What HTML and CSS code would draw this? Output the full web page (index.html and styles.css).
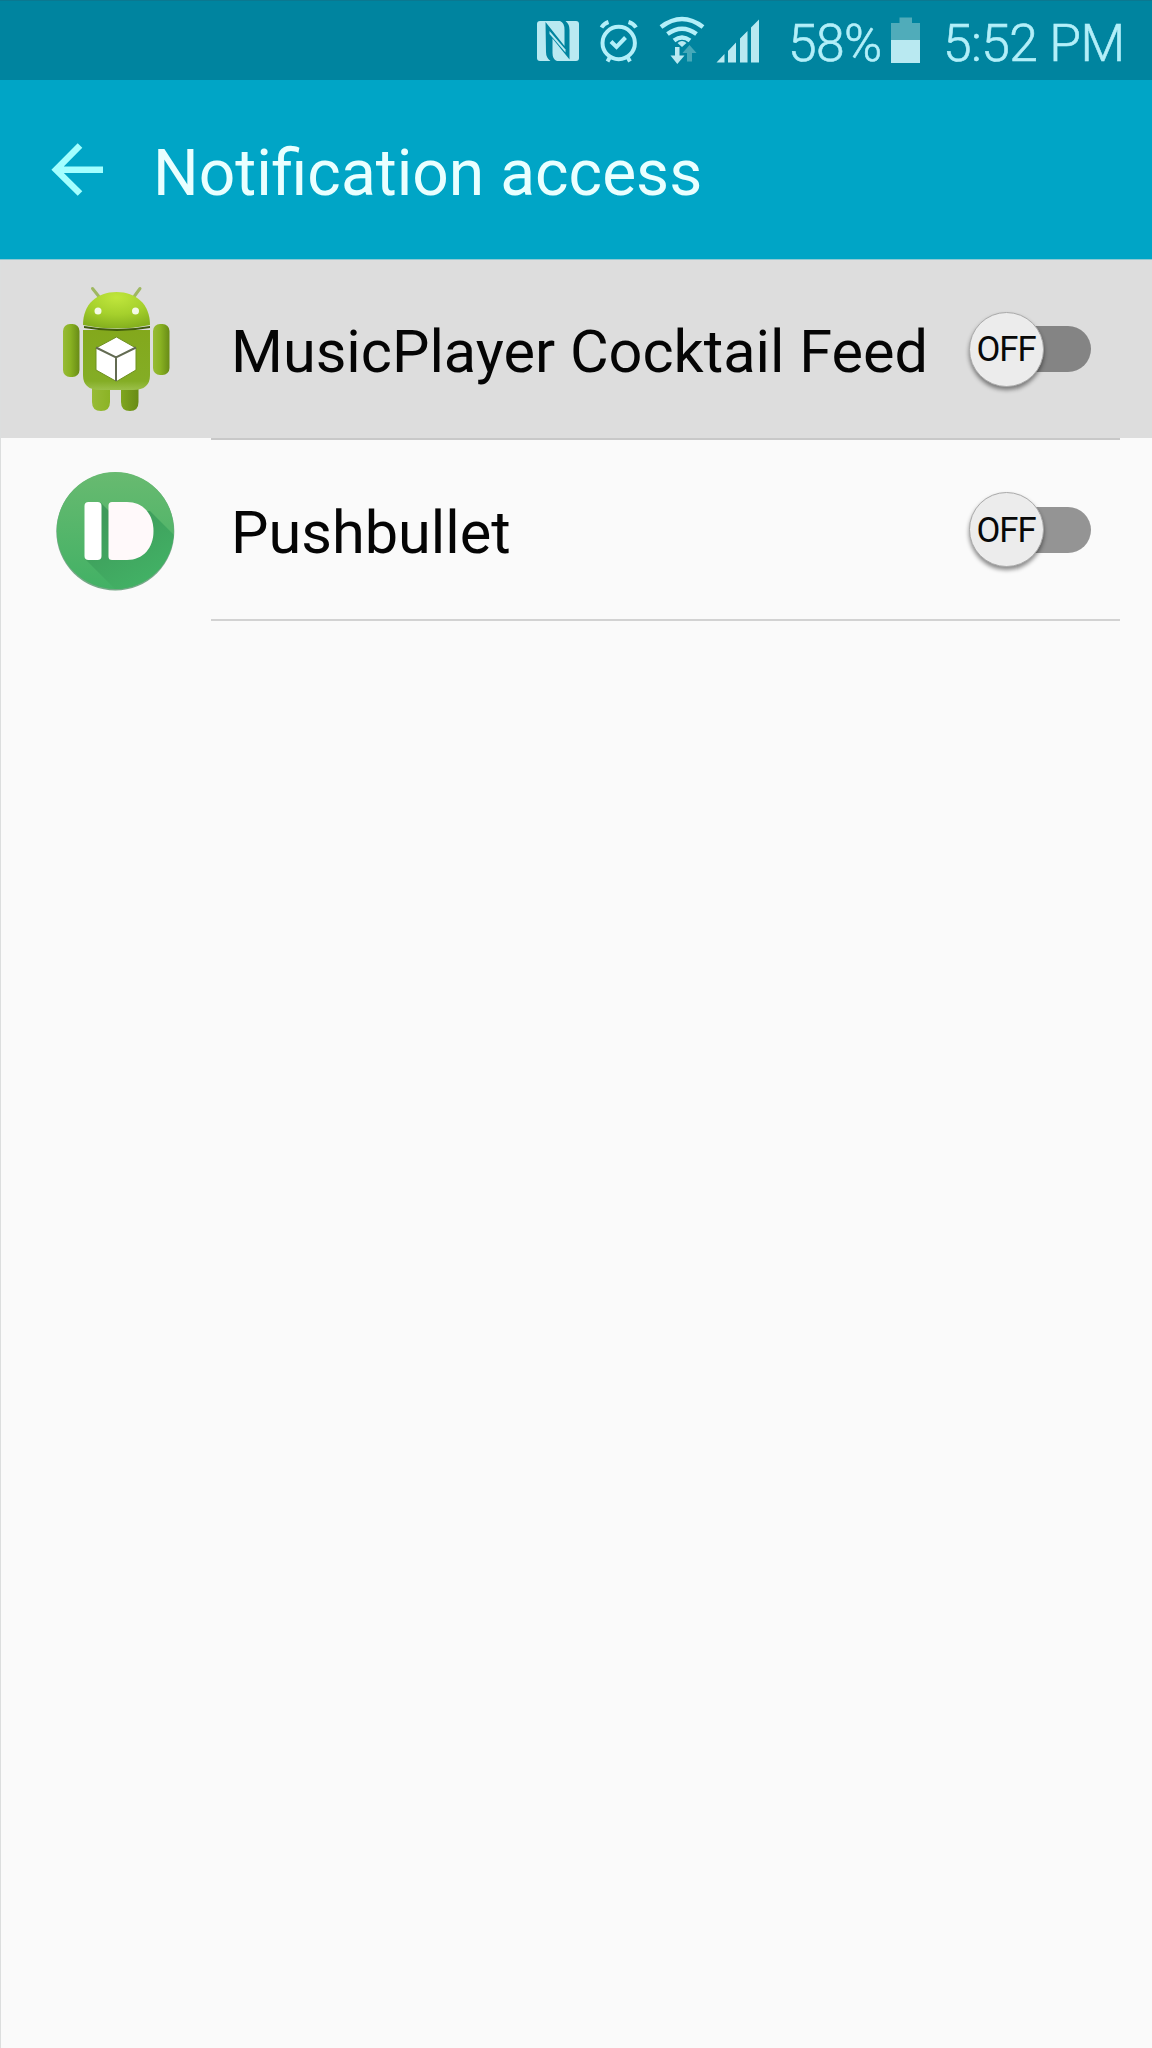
FILE: index.html
```html
<!DOCTYPE html>
<html lang="en">
<head>
<meta charset="utf-8">
<title>Notification access</title>
<link rel="stylesheet" href="styles.css">
</head>
<body>
<div class="screen">
  <div class="status-bar">
    <svg class="status-icon" viewBox="530 0 60 80" aria-label="NFC">
      <rect x="537" y="21" width="42" height="40" rx="3"/>
      <path class="slit" d="M545.500 22L564.500 46V30Q564.500 22.500 560 21H565.500Q569.500 24 569.500 30V59.500L552.500 38.500V53Q552.500 59.500 557 61H550.500Q546 58 546 52Z"/>
      <path d="M549.500 31L565.500 49.500V52.500L549.500 34Z"/>
    </svg>
    <svg class="status-icon" viewBox="590 0 60 80" aria-label="Alarm">
      <g class="line"><circle cx="618.700" cy="43" r="16.200"/><path d="M611 41.500L616.500 47L625.500 37.500M601.500 27.500Q604 23.500 608.500 22M628.500 22Q633.500 23.500 636 27.500M610 57L607.500 61.500M627.500 57L630 61.500"/></g>
    </svg>
    <svg class="status-icon" viewBox="650 0 60 80" aria-label="Wi-Fi">
      <g class="wave"><path d="M661 27Q682 11 703 27M667.500 34Q682 23.500 696.500 34M674 40.500Q682 34.500 690 40.500"/></g>
      <path d="M677.500 43Q682 39 686.500 43L682 47Z"/>
      <path d="M675 47H679.500V55.500H684.500L677.300 64L670.500 55.500H675Z"/>
      <path class="dim" d="M689.500 45L696.500 53H692V61.500H687V53H682.500Z"/>
    </svg>
    <svg class="status-icon" viewBox="710 0 60 80" aria-label="Signal">
      <path d="M716.500 62.500L724.500 54V62.500ZM728 51L736 42.500V62.500H728ZM740 38.500L747.500 31V62.500H740ZM751 27.500L759 19.500V62.500H751Z"/>
    </svg>
    <span class="percent">58%</span>
    <svg class="battery" viewBox="885 0 42 80" aria-label="Battery">
      <path class="dim-full" d="M899.500 17.500H912V23H920V40H891V23H899.500Z"/><path d="M891 40H920V63H891Z"/>
    </svg>
    <span class="clock">5:52 PM</span>
  </div>
  <header class="app-bar">
    <svg class="back" viewBox="48 140 60 60" aria-label="Back"><path d="M102 169.700H56M79 145.500L55 169.700L79 193.500"/></svg>
    <h1 class="title">Notification access</h1>
  </header>
  <main class="list">
    <div class="row pressed">
      <svg class="app-icon" viewBox="40 260 160 178" aria-hidden="true">
        <defs>
          <radialGradient id="head" cx=".5" cy=".15" r=".85"><stop offset="0" stop-color="#c0e63c"/><stop offset=".55" stop-color="#a5d02c"/><stop offset="1" stop-color="#84b01e"/></radialGradient>
          <linearGradient id="torso" x1="0" y1="0" x2="0" y2="1"><stop offset="0" stop-color="#83a81c"/><stop offset=".85" stop-color="#84ad25"/><stop offset="1" stop-color="#9bc04a"/></linearGradient>
          <linearGradient id="limb" x1="0" y1="0" x2="1" y2="0"><stop offset="0" stop-color="#98bb36"/><stop offset=".45" stop-color="#89b222"/><stop offset="1" stop-color="#688b16"/></linearGradient>
        </defs>
        <path class="antenna" d="M92.500 288.500L98.500 296M140 288.500L134.500 296"/>
        <path d="M92 385H110V402Q110 411 101 411Q92 411 92 402ZM121 385H138.500V402Q138.500 411 130 411Q121 411 121 402Z" fill="url(#limb)"/>
        <rect x="63" y="324" width="16.500" height="53" rx="7" fill="url(#limb)"/>
        <rect x="153" y="324" width="16.500" height="51" rx="7" fill="url(#limb)"/>
        <path d="M83 330H150V375Q150 390 133 390H100Q83 390 83 375Z" fill="url(#torso)"/>
        <path d="M84 326Q117 332 150 326V328Q117 334 84 328Z" fill="#405b0c"/>
        <path d="M83 325C83 304 97 292 116.500 292S150 304 150 325Q133 328.500 116.500 328.500T83 325Z" fill="url(#head)"/>
        <circle cx="98" cy="311" r="3.500" fill="#f4fae6"/><circle cx="135.500" cy="311" r="3.500" fill="#f4fae6"/>
        <path d="M116.500 337L136 348V370L116.500 381.500L96 370V348Z" fill="#fff" stroke="#6f9120" stroke-width="1"/>
        <path d="M96 347.500L116 357.500L136 347.500M116 357.500V381" fill="none" stroke="#636b52" stroke-width="2"/>
      </svg>
      <span class="label">MusicPlayer Cocktail Feed</span>
      <span class="switch"><span class="thumb">OFF</span></span>
    </div>
    <div class="row">
      <svg class="app-icon" viewBox="40 440 160 178" aria-hidden="true">
        <defs>
          <linearGradient id="disc" x1="0" y1="0" x2="0" y2="1"><stop offset="0" stop-color="#68ba70"/><stop offset="1" stop-color="#42b165"/></linearGradient>
          <linearGradient id="cast" gradientUnits="userSpaceOnUse" x1="115" y1="510" x2="155" y2="575"><stop offset="0" stop-color="#3e9a5a"/><stop offset="1" stop-color="#42b165"/></linearGradient>
          <clipPath id="round"><circle cx="115.300" cy="529.500" r="58.500"/></clipPath>
        </defs>
        <circle cx="115.300" cy="530.500" r="59" fill="#2e7c4a" opacity=".65"/>
        <circle cx="115.300" cy="529.500" r="58.500" fill="url(#disc)"/>
        <path clip-path="url(#round)" d="M100 501L109 510L150 510L190 550V600H127L85 558Z" fill="url(#cast)"/>
        <rect x="84.500" y="501" width="17" height="58" rx="4" fill="#fff"/>
        <path d="M112 501H127C143 501 153.500 513 153.500 530S143 559 127 559H112Q108.500 559 108.500 555.500V504.500Q108.500 501 112 501Z" fill="#fff9fa"/>
      </svg>
      <span class="label">Pushbullet</span>
      <span class="switch"><span class="thumb">OFF</span></span>
    </div>
  </main>
</div>
</body>
</html>
```
FILE: styles.css
```css
* { box-sizing: border-box; }
body { margin: 0; font-family: Roboto, sans-serif; background: #fafafa; }
.screen { display: flex; flex-direction: column; width: 1152px; height: 2048px; background: #fafafa; overflow: hidden; }
.status-bar, .app-bar, .row { display: flex; flex: none; align-items: center; width: 1152px; }
.status-bar { height: 80px; padding-left: 530px; background: #00849f; border-top: 1px solid #0b7890; color: #b3eff9; font-size: 51.6px; font-weight: 300; letter-spacing: -0.6px; -webkit-text-stroke: 0.6px #b3eff9; white-space: nowrap; }
.status-bar svg { flex: none; height: 80px; fill: #b9e9f1; margin-top: -1px; }
.status-icon { width: 60px; }
.status-bar .line { fill: none; stroke: #b3eff9; stroke-width: 4; }
.status-bar .wave { fill: none; stroke: #b3eff9; stroke-width: 4.5; }
.status-bar .slit { fill: #00849f; }
.status-bar .dim { fill: #46a9b9; }
.status-bar .dim-full { fill: #50acba; }
.percent, .clock { line-height: 60px; padding-top: 6px; }
.percent { width: 97px; margin-left: 18px; }
.battery { width: 42px; }
.clock { margin-left: 16px; }
.app-bar { height: 180px; background: #00a5c6; border-bottom: 1px solid #8fc9d3; padding-left: 49px; }
.back { width: 60px; height: 60px; fill: none; stroke: #a3ffff; stroke-width: 6.5; }
.title { margin: 0 0 0 44px; padding-top: 8px; color: #e9ffff; font-size: 64.1px; font-weight: 400; line-height: 80px; white-space: nowrap; }
.list { flex: 1; border-left: 1px solid #dcdede; }
.row { position: relative; width: 1151px; height: 181px; padding-left: 39px; }
.row.pressed { height: 180px; background: linear-gradient(#ddd 178px, #fafafa 178px); }
.row::after { content: ""; position: absolute; left: 210px; right: 32px; bottom: 0; height: 2px; background: #d2d2d2; }
.row.pressed::after { background: #c8c8c8; }
.app-icon { flex: none; width: 160px; height: 178px; margin-bottom: 2px; }
.antenna { fill: none; stroke: #9fb861; stroke-width: 3; stroke-linecap: round; }
.label { width: 738px; margin-left: 31px; padding-top: 4px; color: #050505; font-size: 59.45px; line-height: 76px; white-space: nowrap; }
.switch { display: flex; align-items: center; justify-content: flex-start; width: 122px; height: 46px; margin-bottom: 2px; border-radius: 23px; background: linear-gradient(90deg, transparent 40px, #949494 40px); }
.pressed .switch { background: linear-gradient(90deg, transparent 40px, #848484 40px); }
.thumb { flex: none; display: flex; align-items: center; justify-content: center; width: 75px; height: 75px; border-radius: 50%; background: #ececec; border: 1px solid #aaa; box-shadow: 0 3px 4px rgba(0,0,0,.45); color: #080808; font-size: 34.7px; line-height: 40px; letter-spacing: -1px; padding-right: 1px; }
```
